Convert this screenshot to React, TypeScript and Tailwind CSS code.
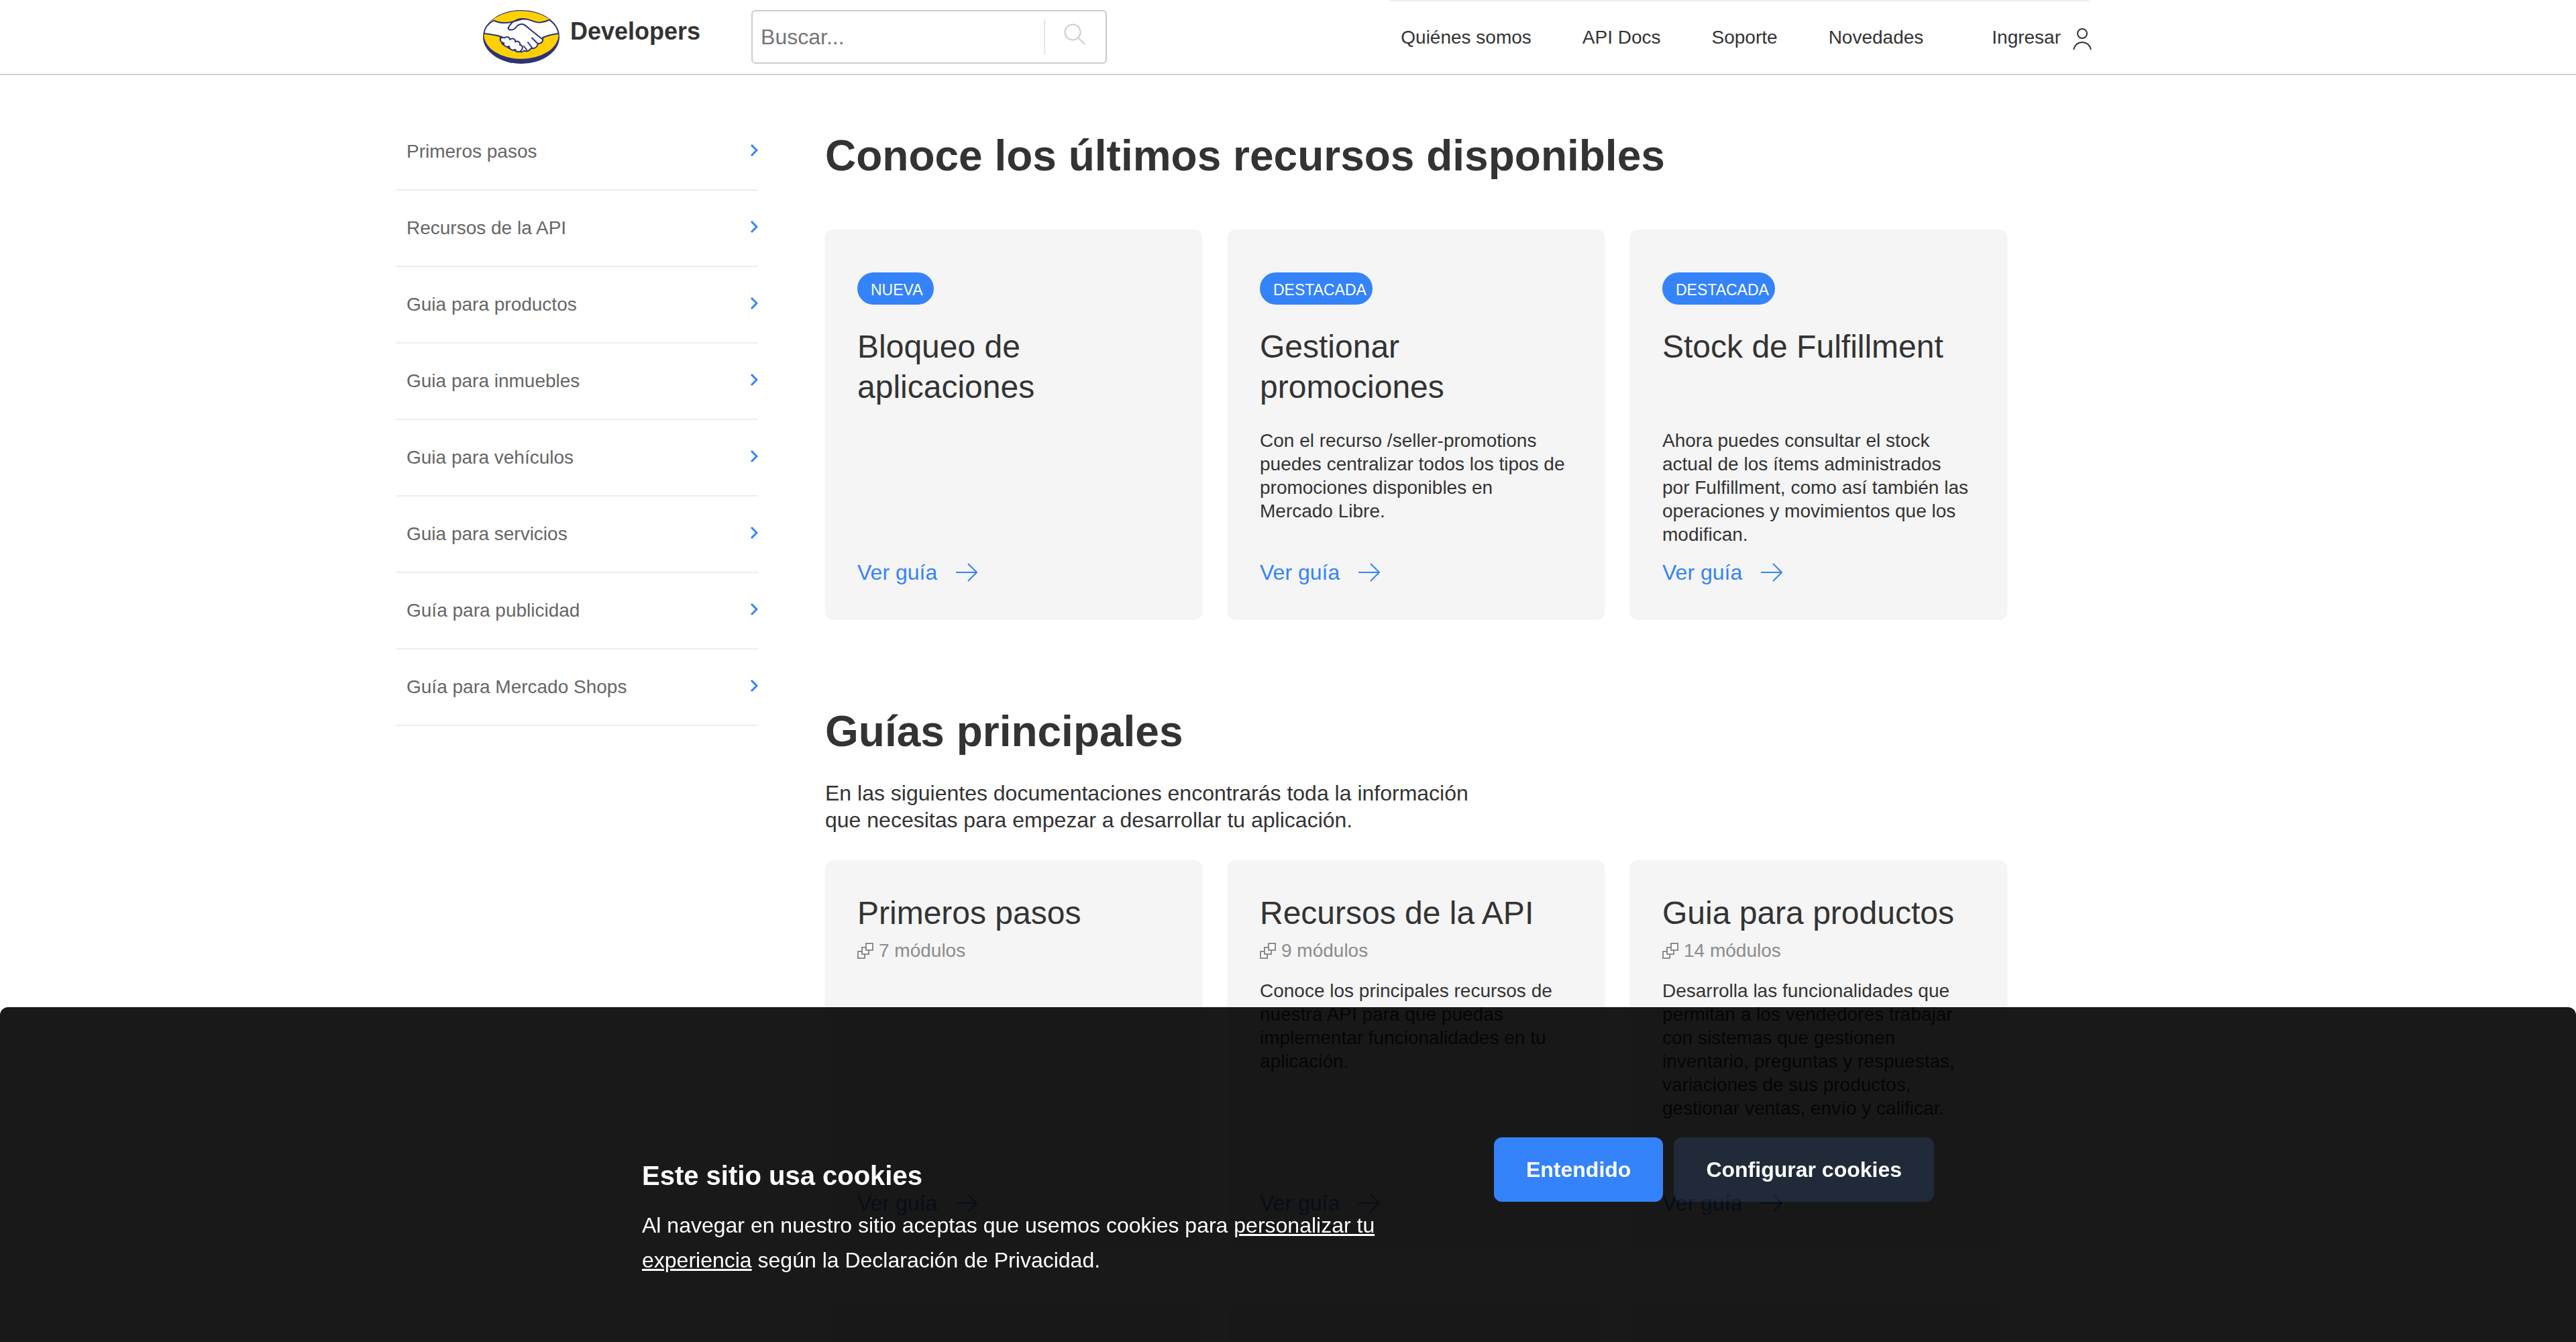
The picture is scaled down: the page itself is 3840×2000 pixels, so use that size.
import React from "react";

const sidebarLinks = [
  "Primeros pasos",
  "Recursos de la API",
  "Guia para productos",
  "Guia para inmuebles",
  "Guia para vehículos",
  "Guia para servicios",
  "Guía para publicidad",
  "Guía para Mercado Shops",
];

const navLinks = ["Quiénes somos", "API Docs", "Soporte", "Novedades"];

const featured = [
  { badge: "NUEVA", badgeWidth: "w-[114px]", title: "Bloqueo de aplicaciones", text: "" },
  {
    badge: "DESTACADA",
    badgeWidth: "w-[168px]",
    title: "Gestionar promociones",
    text: "Con el recurso /seller-promotions puedes centralizar todos los tipos de promociones disponibles en Mercado Libre.",
  },
  {
    badge: "DESTACADA",
    badgeWidth: "w-[168px]",
    title: "Stock de Fulfillment",
    text: "Ahora puedes consultar el stock actual de los ítems administrados por Fulfillment, como así también las operaciones y movimientos que los modifican.",
  },
];

const guides = [
  { title: "Primeros pasos", modules: 7, text: "" },
  {
    title: "Recursos de la API",
    modules: 9,
    text: "Conoce los principales recursos de nuestra API para que puedas implementar funcionalidades en tu aplicación.",
  },
  {
    title: "Guia para productos",
    modules: 14,
    text: "Desarrolla las funcionalidades que permitan a los vendedores trabajar con sistemas que gestionen inventario, preguntas y respuestas, variaciones de sus productos, gestionar ventas, envío y calificar.",
  },
];

function Logo() {
  return (
    <svg viewBox="0 0 114 80" className="h-20 w-[114px] shrink-0" aria-hidden="true">
      <ellipse cx="57" cy="40" rx="57" ry="40" fill="#2d3277" />
      <ellipse cx="57" cy="37" rx="55.5" ry="35.8" fill="#ffd100" />
      <g stroke="#2d3277" strokeWidth="2" strokeLinejoin="round" strokeLinecap="round">
        <path
          d="M16 15.500C23 19 34 20 44 17.500L60 13C70 13 76 19 85 18.500C91 18 95 16.500 99 14.500C107 20.500 112 28 112.500 35C104 36 96 38 89 41C90 46 88 50 82 50C81 55 77 58 71.500 57C69 61 65 62 61 60.500C59 63 56 63 53 61C48 62 45 59 44 57C39 58 36 56 35 52C30 53 27 50 28 46C24 44 26 39 28 40C20 37 11 36 1.500 35C2 28 7 20.500 16 15.500Z"
          fill="#fff"
        />
        <path
          d="M28 48C24 45 26 39 32 41.500C35 39 40 40 40 44C44 41 49 43 48 47.500C52 45 56 48 55 52C59 52 60 56 57.500 59.500C55 63.500 49 63 48 59C43 61 39 58 39 54C34 56 30 53 31 49C30 49 29 49 28 48Z"
          fill="#fff"
        />
        <path
          d="M44 18C41 21 39 24 37.500 26.500C38 30 43 30.500 47 28C51 24 53 20.500 59 21C63 22 66 25 69 28L88 43"
          fill="#fff"
        />
        <path d="M44 18C50 14 56 12 62 13.500" fill="none" />
        <path d="M73 41.500L81 49.500M67 48L73 56M61 54L65 59" fill="none" />
      </g>
    </svg>
  );
}

function Arrow() {
  return (
    <svg viewBox="0 0 32 28" className="h-7 w-8" fill="none" stroke="currentColor" strokeWidth="2" aria-hidden="true">
      <path d="M0 14H31M18 1L31 14L18 27" />
    </svg>
  );
}

function ModulesIcon() {
  return (
    <svg viewBox="0 0 24 24" className="size-6" fill="#fff" stroke="#8c8c8c" strokeWidth="2" aria-hidden="true">
      <rect x="1" y="13" width="10" height="10" />
      <rect x="7" y="7" width="10" height="10" />
      <rect x="13" y="1" width="10" height="10" />
    </svg>
  );
}

function Card({ children, top }: { children?: React.ReactNode; top: string }) {
  return (
    <article
      className={`flex min-h-[580px] flex-col rounded-xl bg-[#f5f5f5] px-12 pb-[49px] shadow-[0_1px_2px_rgba(0,0,0,0.08)] ${top}`}
    >
      {children}
    </article>
  );
}

function GuideLink() {
  return (
    <a href="#guia" className="mt-auto flex items-center gap-7 self-start text-[32px] leading-10 text-[#3483fa]">
      Ver guía
      <Arrow />
    </a>
  );
}

function Header() {
  return (
    <header className="h-28 border-b-2 border-[#d0d0d0] bg-white">
      <div className="mx-auto flex h-full max-w-[2400px] items-center">
        <a href="#inicio" className="flex items-center gap-4">
          <Logo />
          <span className="mb-4 text-[36px] leading-10 font-bold">Developers</span>
        </a>
        <form role="search" className="ml-[76px] flex h-20 w-[530px] items-center rounded-md border-2 border-[#ccc]">
          <input
            type="search"
            aria-label="Buscar"
            placeholder="Buscar..."
            className="min-w-0 flex-1 pl-3 text-[32px] leading-10 outline-none placeholder:text-[#757575]"
          />
          <button
            type="button"
            aria-label="Buscar"
            className="flex h-[52px] w-[92px] items-start border-l-2 border-[#e6e6e6] pt-1.5 pl-7"
          >
            <svg viewBox="0 0 32 32" className="size-8" fill="none" stroke="#ccc" strokeWidth="2" aria-hidden="true">
              <circle cx="13" cy="13" r="11.500" />
              <path d="M21 21L31 31" />
            </svg>
          </button>
        </form>
        <nav className="mr-1.5 ml-auto flex h-full items-center gap-[76px] border-t-2 border-[#ededed] pl-[17px] text-[28px] leading-9">
          {navLinks.map((label) => (
            <a key={label} href="#nav">
              {label}
            </a>
          ))}
          <a href="#ingresar" className="-mr-1 ml-[26px] flex items-center gap-[18px]">
            Ingresar
            <svg viewBox="0 0 28 32" className="mt-1 h-8 w-7" fill="none" stroke="#333" strokeWidth="2" aria-hidden="true">
              <circle cx="14" cy="8" r="7" />
              <path d="M1 32C3 25 8 21 14 21S25 25 27 32" />
            </svg>
          </a>
        </nav>
      </div>
    </header>
  );
}

function Sidebar() {
  return (
    <nav aria-label="Guías" className="w-[540px] shrink-0">
      <ul>
        {sidebarLinks.map((label) => (
          <li key={label} className="border-b-2 border-[#ededed]">
            <a href="#guia" className="flex h-28 items-center justify-between pl-4 text-[28px] leading-9 text-[#666]">
              {label}
              <svg viewBox="0 0 12 20" className="mb-1 h-5 w-3" fill="none" stroke="#3483fa" strokeWidth="3" aria-hidden="true">
                <path d="M2 2L10 10L2 18" />
              </svg>
            </a>
          </li>
        ))}
      </ul>
    </nav>
  );
}

function CookieBanner() {
  return (
    <section
      aria-label="Cookies"
      className="fixed inset-x-0 bottom-0 rounded-t-xl bg-black/90 pt-[194px] pb-24 text-white"
    >
      <div className="mx-auto flex max-w-[1926px] items-start justify-between">
        <div className="max-w-[1130px] pt-[33px]">
          <h2 className="text-[40px] leading-[48px] font-bold">Este sitio usa cookies</h2>
          <p className="mt-6 text-[32px] leading-[52px]">
            Al navegar en nuestro sitio aceptas que usemos cookies para{" "}
            <a href="#cookies" className="underline">
              personalizar tu experiencia
            </a>{" "}
            según la Declaración de Privacidad.
          </p>
        </div>
        <div className="flex shrink-0 gap-4 text-[32px] leading-10 font-bold">
          <button type="button" className="h-24 rounded-xl bg-[#3483fa] px-12">
            Entendido
          </button>
          <button type="button" className="h-24 rounded-xl bg-[#4189e6]/15 px-12">
            Configurar cookies
          </button>
        </div>
      </div>
    </section>
  );
}

export default function App() {
  return (
    <div className="h-screen overflow-hidden bg-white font-['Liberation_Sans',Arial,sans-serif] text-[#333]">
      <Header />
      <div className="mx-auto flex max-w-[2660px] items-start gap-[100px] pt-[58px]">
        <Sidebar />
        <main className="max-w-[1762px] flex-1 pt-[22px]">
          <section>
            <h1 className="text-[64px] leading-[80px] font-bold">Conoce los últimos recursos disponibles</h1>
            <div className="mt-[70px] grid grid-cols-3 gap-x-[38px]">
              {featured.map((item) => (
                <Card key={item.title} top="pt-16">
                  <span
                    className={`h-12 rounded-3xl bg-[#3483fa] pt-1 pl-5 text-[23px] leading-[44px] whitespace-nowrap text-white ${item.badgeWidth}`}
                  >
                    {item.badge}
                  </span>
                  <h2 className="mt-[33px] min-h-[120px] text-[48px] leading-[60px]">{item.title}</h2>
                  <p className="mt-8 max-w-[460px] text-[28px] leading-[35px]">{item.text}</p>
                  <GuideLink />
                </Card>
              ))}
            </div>
          </section>
          <section className="mt-32">
            <h1 className="text-[64px] leading-[80px] font-bold">Guías principales</h1>
            <p className="mt-8 max-w-[980px] text-[32px] leading-10">
              En las siguientes documentaciones encontrarás toda la información que necesitas para empezar a desarrollar
              tu aplicación.
            </p>
            <div className="mt-10 grid grid-cols-3 gap-x-[38px] gap-y-20">
              {guides.map((item) => (
                <Card key={item.title} top="pt-[49px]">
                  <h2 className="text-[48px] leading-[60px]">{item.title}</h2>
                  <p className="mt-2 flex items-center gap-2 text-[28px] leading-9 text-[#8c8c8c]">
                    <ModulesIcon />
                    {item.modules} módulos
                  </p>
                  <p className="mt-6 max-w-[460px] text-[28px] leading-[35px]">{item.text}</p>
                  <GuideLink />
                </Card>
              ))}
              <Card top="pt-[49px]" />
              <Card top="pt-[49px]" />
              <Card top="pt-[49px]" />
            </div>
          </section>
        </main>
      </div>
      <CookieBanner />
    </div>
  );
}
